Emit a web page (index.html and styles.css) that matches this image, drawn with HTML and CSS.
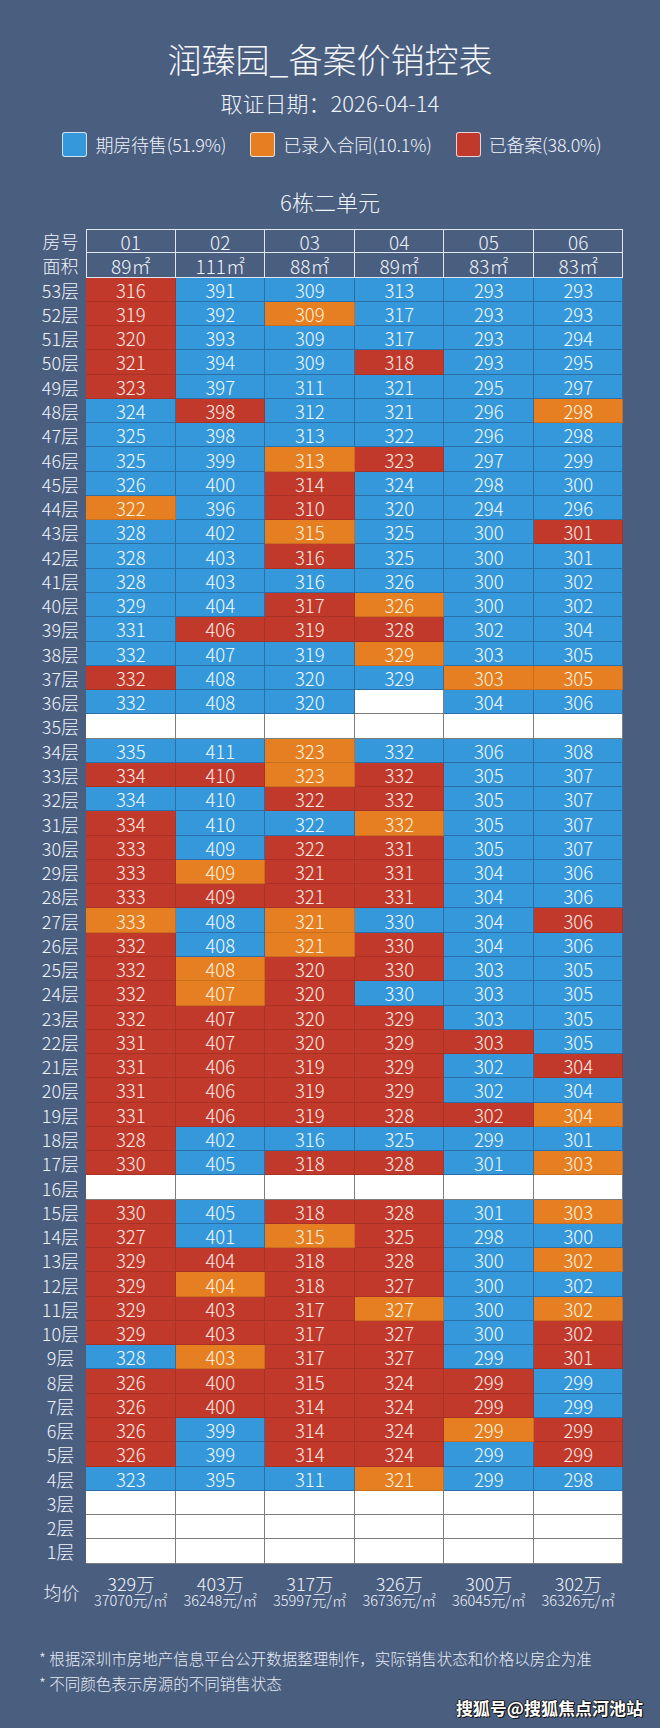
FILE: index.html
```html
<!DOCTYPE html>
<html lang="zh-CN">
<head>
<meta charset="utf-8">
<title>润臻园_备案价销控表</title>
<link rel="stylesheet" href="styles.css">
</head>
<body>
<div class="page">
  <h1 class="title">润臻园_备案价销控表</h1>
  <div class="date">取证日期：2026-04-14</div>
  <div class="legend">
    <div class="lg"><span class="sw b"></span>期房待售(51.9%)</div>
    <div class="lg"><span class="sw o"></span>已录入合同(10.1%)</div>
    <div class="lg"><span class="sw r"></span>已备案(38.0%)</div>
  </div>
  <div class="unit">6栋二单元</div>

  <div class="grid">
    <div class="f">房号</div><div class="hd t l">01</div><div class="hd t">02</div><div class="hd t">03</div><div class="hd t">04</div><div class="hd t">05</div><div class="hd t">06</div>
    <div class="f">面积</div><div class="hd l">89㎡</div><div class="hd">111㎡</div><div class="hd">88㎡</div><div class="hd">89㎡</div><div class="hd">83㎡</div><div class="hd">83㎡</div>
    <div class="f">53层</div><div class="c r">316</div><div class="c b">391</div><div class="c b">309</div><div class="c b">313</div><div class="c b">293</div><div class="c b">293</div>
    <div class="f">52层</div><div class="c r">319</div><div class="c b">392</div><div class="c o">309</div><div class="c b">317</div><div class="c b">293</div><div class="c b">293</div>
    <div class="f">51层</div><div class="c r">320</div><div class="c b">393</div><div class="c b">309</div><div class="c b">317</div><div class="c b">293</div><div class="c b">294</div>
    <div class="f">50层</div><div class="c r">321</div><div class="c b">394</div><div class="c b">309</div><div class="c r">318</div><div class="c b">293</div><div class="c b">295</div>
    <div class="f">49层</div><div class="c r">323</div><div class="c b">397</div><div class="c b">311</div><div class="c b">321</div><div class="c b">295</div><div class="c b">297</div>
    <div class="f">48层</div><div class="c b">324</div><div class="c r">398</div><div class="c b">312</div><div class="c b">321</div><div class="c b">296</div><div class="c o">298</div>
    <div class="f">47层</div><div class="c b">325</div><div class="c b">398</div><div class="c b">313</div><div class="c b">322</div><div class="c b">296</div><div class="c b">298</div>
    <div class="f">46层</div><div class="c b">325</div><div class="c b">399</div><div class="c o">313</div><div class="c r">323</div><div class="c b">297</div><div class="c b">299</div>
    <div class="f">45层</div><div class="c b">326</div><div class="c b">400</div><div class="c r">314</div><div class="c b">324</div><div class="c b">298</div><div class="c b">300</div>
    <div class="f">44层</div><div class="c o">322</div><div class="c b">396</div><div class="c r">310</div><div class="c b">320</div><div class="c b">294</div><div class="c b">296</div>
    <div class="f">43层</div><div class="c b">328</div><div class="c b">402</div><div class="c o">315</div><div class="c b">325</div><div class="c b">300</div><div class="c r">301</div>
    <div class="f">42层</div><div class="c b">328</div><div class="c b">403</div><div class="c r">316</div><div class="c b">325</div><div class="c b">300</div><div class="c b">301</div>
    <div class="f">41层</div><div class="c b">328</div><div class="c b">403</div><div class="c b">316</div><div class="c b">326</div><div class="c b">300</div><div class="c b">302</div>
    <div class="f">40层</div><div class="c b">329</div><div class="c b">404</div><div class="c r">317</div><div class="c o">326</div><div class="c b">300</div><div class="c b">302</div>
    <div class="f">39层</div><div class="c b">331</div><div class="c r">406</div><div class="c r">319</div><div class="c r">328</div><div class="c b">302</div><div class="c b">304</div>
    <div class="f">38层</div><div class="c b">332</div><div class="c b">407</div><div class="c b">319</div><div class="c o">329</div><div class="c b">303</div><div class="c b">305</div>
    <div class="f">37层</div><div class="c r">332</div><div class="c b">408</div><div class="c b">320</div><div class="c b">329</div><div class="c o">303</div><div class="c o">305</div>
    <div class="f">36层</div><div class="c b">332</div><div class="c b">408</div><div class="c b">320</div><div class="c w"></div><div class="c b">304</div><div class="c b">306</div>
    <div class="f">35层</div><div class="c w"></div><div class="c w"></div><div class="c w"></div><div class="c w"></div><div class="c w"></div><div class="c w"></div>
    <div class="f">34层</div><div class="c b">335</div><div class="c b">411</div><div class="c o">323</div><div class="c b">332</div><div class="c b">306</div><div class="c b">308</div>
    <div class="f">33层</div><div class="c r">334</div><div class="c r">410</div><div class="c o">323</div><div class="c r">332</div><div class="c b">305</div><div class="c b">307</div>
    <div class="f">32层</div><div class="c b">334</div><div class="c b">410</div><div class="c r">322</div><div class="c r">332</div><div class="c b">305</div><div class="c b">307</div>
    <div class="f">31层</div><div class="c r">334</div><div class="c b">410</div><div class="c b">322</div><div class="c o">332</div><div class="c b">305</div><div class="c b">307</div>
    <div class="f">30层</div><div class="c r">333</div><div class="c b">409</div><div class="c r">322</div><div class="c r">331</div><div class="c b">305</div><div class="c b">307</div>
    <div class="f">29层</div><div class="c r">333</div><div class="c o">409</div><div class="c r">321</div><div class="c r">331</div><div class="c b">304</div><div class="c b">306</div>
    <div class="f">28层</div><div class="c r">333</div><div class="c r">409</div><div class="c r">321</div><div class="c r">331</div><div class="c b">304</div><div class="c b">306</div>
    <div class="f">27层</div><div class="c o">333</div><div class="c b">408</div><div class="c o">321</div><div class="c b">330</div><div class="c b">304</div><div class="c r">306</div>
    <div class="f">26层</div><div class="c r">332</div><div class="c b">408</div><div class="c o">321</div><div class="c r">330</div><div class="c b">304</div><div class="c b">306</div>
    <div class="f">25层</div><div class="c r">332</div><div class="c o">408</div><div class="c r">320</div><div class="c r">330</div><div class="c b">303</div><div class="c b">305</div>
    <div class="f">24层</div><div class="c r">332</div><div class="c o">407</div><div class="c r">320</div><div class="c b">330</div><div class="c b">303</div><div class="c b">305</div>
    <div class="f">23层</div><div class="c r">332</div><div class="c r">407</div><div class="c r">320</div><div class="c r">329</div><div class="c b">303</div><div class="c b">305</div>
    <div class="f">22层</div><div class="c r">331</div><div class="c r">407</div><div class="c r">320</div><div class="c r">329</div><div class="c r">303</div><div class="c b">305</div>
    <div class="f">21层</div><div class="c r">331</div><div class="c r">406</div><div class="c r">319</div><div class="c r">329</div><div class="c b">302</div><div class="c r">304</div>
    <div class="f">20层</div><div class="c r">331</div><div class="c r">406</div><div class="c r">319</div><div class="c r">329</div><div class="c b">302</div><div class="c b">304</div>
    <div class="f">19层</div><div class="c r">331</div><div class="c r">406</div><div class="c r">319</div><div class="c r">328</div><div class="c r">302</div><div class="c o">304</div>
    <div class="f">18层</div><div class="c r">328</div><div class="c b">402</div><div class="c b">316</div><div class="c b">325</div><div class="c b">299</div><div class="c b">301</div>
    <div class="f">17层</div><div class="c r">330</div><div class="c b">405</div><div class="c r">318</div><div class="c r">328</div><div class="c b">301</div><div class="c o">303</div>
    <div class="f">16层</div><div class="c w"></div><div class="c w"></div><div class="c w"></div><div class="c w"></div><div class="c w"></div><div class="c w"></div>
    <div class="f">15层</div><div class="c r">330</div><div class="c b">405</div><div class="c r">318</div><div class="c r">328</div><div class="c b">301</div><div class="c o">303</div>
    <div class="f">14层</div><div class="c r">327</div><div class="c b">401</div><div class="c o">315</div><div class="c r">325</div><div class="c b">298</div><div class="c b">300</div>
    <div class="f">13层</div><div class="c r">329</div><div class="c r">404</div><div class="c r">318</div><div class="c r">328</div><div class="c b">300</div><div class="c o">302</div>
    <div class="f">12层</div><div class="c r">329</div><div class="c o">404</div><div class="c r">318</div><div class="c r">327</div><div class="c b">300</div><div class="c b">302</div>
    <div class="f">11层</div><div class="c r">329</div><div class="c r">403</div><div class="c r">317</div><div class="c o">327</div><div class="c b">300</div><div class="c o">302</div>
    <div class="f">10层</div><div class="c r">329</div><div class="c r">403</div><div class="c r">317</div><div class="c r">327</div><div class="c b">300</div><div class="c r">302</div>
    <div class="f">9层</div><div class="c b">328</div><div class="c o">403</div><div class="c r">317</div><div class="c r">327</div><div class="c b">299</div><div class="c r">301</div>
    <div class="f">8层</div><div class="c r">326</div><div class="c r">400</div><div class="c r">315</div><div class="c r">324</div><div class="c r">299</div><div class="c b">299</div>
    <div class="f">7层</div><div class="c r">326</div><div class="c r">400</div><div class="c r">314</div><div class="c r">324</div><div class="c r">299</div><div class="c b">299</div>
    <div class="f">6层</div><div class="c r">326</div><div class="c b">399</div><div class="c r">314</div><div class="c r">324</div><div class="c o">299</div><div class="c r">299</div>
    <div class="f">5层</div><div class="c r">326</div><div class="c b">399</div><div class="c r">314</div><div class="c r">324</div><div class="c b">299</div><div class="c r">299</div>
    <div class="f">4层</div><div class="c b">323</div><div class="c b">395</div><div class="c b">311</div><div class="c o">321</div><div class="c b">299</div><div class="c b">298</div>
    <div class="f">3层</div><div class="c w"></div><div class="c w"></div><div class="c w"></div><div class="c w"></div><div class="c w"></div><div class="c w"></div>
    <div class="f">2层</div><div class="c w"></div><div class="c w"></div><div class="c w"></div><div class="c w"></div><div class="c w"></div><div class="c w"></div>
    <div class="f">1层</div><div class="c w"></div><div class="c w"></div><div class="c w"></div><div class="c w"></div><div class="c w"></div><div class="c w"></div>
  </div>

  <div class="avg">
    <div class="avg-label">均价</div>
    <div class="ap"><div class="tot">329万</div><div class="per">37070元/㎡</div></div>
    <div class="ap"><div class="tot">403万</div><div class="per">36248元/㎡</div></div>
    <div class="ap"><div class="tot">317万</div><div class="per">35997元/㎡</div></div>
    <div class="ap"><div class="tot">326万</div><div class="per">36736元/㎡</div></div>
    <div class="ap"><div class="tot">300万</div><div class="per">36045元/㎡</div></div>
    <div class="ap"><div class="tot">302万</div><div class="per">36326元/㎡</div></div>
  </div>

  <div class="notes">
    <p>* 根据深圳市房地产信息平台公开数据整理制作，实际销售状态和价格以房企为准</p>
    <p>* 不同颜色表示房源的不同销售状态</p>
  </div>
  <div class="mark">搜狐号@搜狐焦点河池站</div>
</div>
</body>
</html>
```

FILE: styles.css
```css
* { box-sizing: border-box; }
html, body {
  margin: 0;
  padding: 0;
  background: #4a5e80;
}
body {
  font-family: "Microsoft YaHei", "Noto Sans CJK SC", "Noto Sans", sans-serif;
  font-weight: 300;
  color: #eef3f9;
}
.page {
  width: 660px;
  height: 1728px;
  background: #4a5e80;
  padding-top: 39px;
}
.title {
  margin: 0;
  font-size: 34px;
  font-weight: 300;
  line-height: 40px;
  text-align: center;
  color: #f3f6fa;
}
.date {
  margin-top: 10px;
  font-size: 22px;
  line-height: 26px;
  text-align: center;
}
.legend {
  margin-top: 17px;
  display: flex;
  justify-content: center;
  gap: 24px;
  height: 25px;
  padding-left: 4px;
}
.lg {
  display: flex;
  align-items: center;
  gap: 8px;
  font-size: 18px;
  letter-spacing: -0.2px;
  line-height: 25px;
}
.sw {
  flex: none;
  width: 25px;
  height: 25px;
  border: 1.5px solid rgba(235, 240, 248, 0.85);
  border-radius: 3px;
}
.sw.b { background: #3498db; }
.sw.o { background: #e67e22; }
.sw.r { background: #c0392b; }
.unit {
  margin-top: 31px;
  font-size: 22px;
  line-height: 26px;
  text-align: center;
}
.grid {
  margin-top: 15px;
  margin-left: 37px;
  display: grid;
  grid-template-columns: 49px repeat(6, 89.5px);
  grid-auto-rows: 24.27px;
}
.f {
  display: flex;
  align-items: center;
  justify-content: center;
  font-size: 18px;
  padding-right: 2px;
}
.hd {
  display: flex;
  align-items: center;
  justify-content: center;
  font-size: 19px;
  box-shadow: inset -1px -1px 0 #dfe6f0;
}
.hd.t { box-shadow: inset -1px -1px 0 #dfe6f0, inset 0 1px 0 #dfe6f0; }
.hd.l { box-shadow: inset -1px -1px 0 #dfe6f0, inset 1px 0 0 #dfe6f0; }
.hd.t.l { box-shadow: inset -1px -1px 0 #dfe6f0, inset 1px 1px 0 #dfe6f0; }
.c {
  display: flex;
  align-items: center;
  justify-content: center;
  font-size: 18.5px;
  color: #f2f9ff;
}
.c.b { background: #3498db; box-shadow: inset -1px -1px 0 #2b6fa8; }
.c.r { background: #c0392b; box-shadow: inset -1px -1px 0 #a93226; color: #fde9e4; }
.c.o { background: #e67e22; box-shadow: inset -1px -1px 0 #c96e1f; color: #fff3df; }
.c.w { background: #ffffff; box-shadow: inset -1px -1px 0 #7d7d7d; }
.avg {
  margin-top: 10px;
  margin-left: 37px;
  display: grid;
  grid-template-columns: 49px repeat(6, 89.5px);
}
.avg-label {
  display: flex;
  align-items: center;
  justify-content: center;
  font-size: 18px;
  padding-top: 3px;
}
.ap { text-align: center; }
.tot { font-size: 18px; line-height: 18px; }
.per { font-size: 14.5px; line-height: 16px; }
.notes {
  margin-top: 38px;
  padding-left: 39px;
}
.notes p {
  margin: 0;
  font-size: 15.5px;
  line-height: 25px;
  color: #e6ecf4;
}
.mark {
  margin-top: 2px;
  text-align: right;
  padding-right: 17px;
  font-size: 17px;
  line-height: 20px;
  font-weight: 700;
  color: #ffffff;
  text-shadow: 1px 1px 0 #111, -1px 0 0 #222, 0 -1px 0 #222, 1px 0 0 #111;
}
```
